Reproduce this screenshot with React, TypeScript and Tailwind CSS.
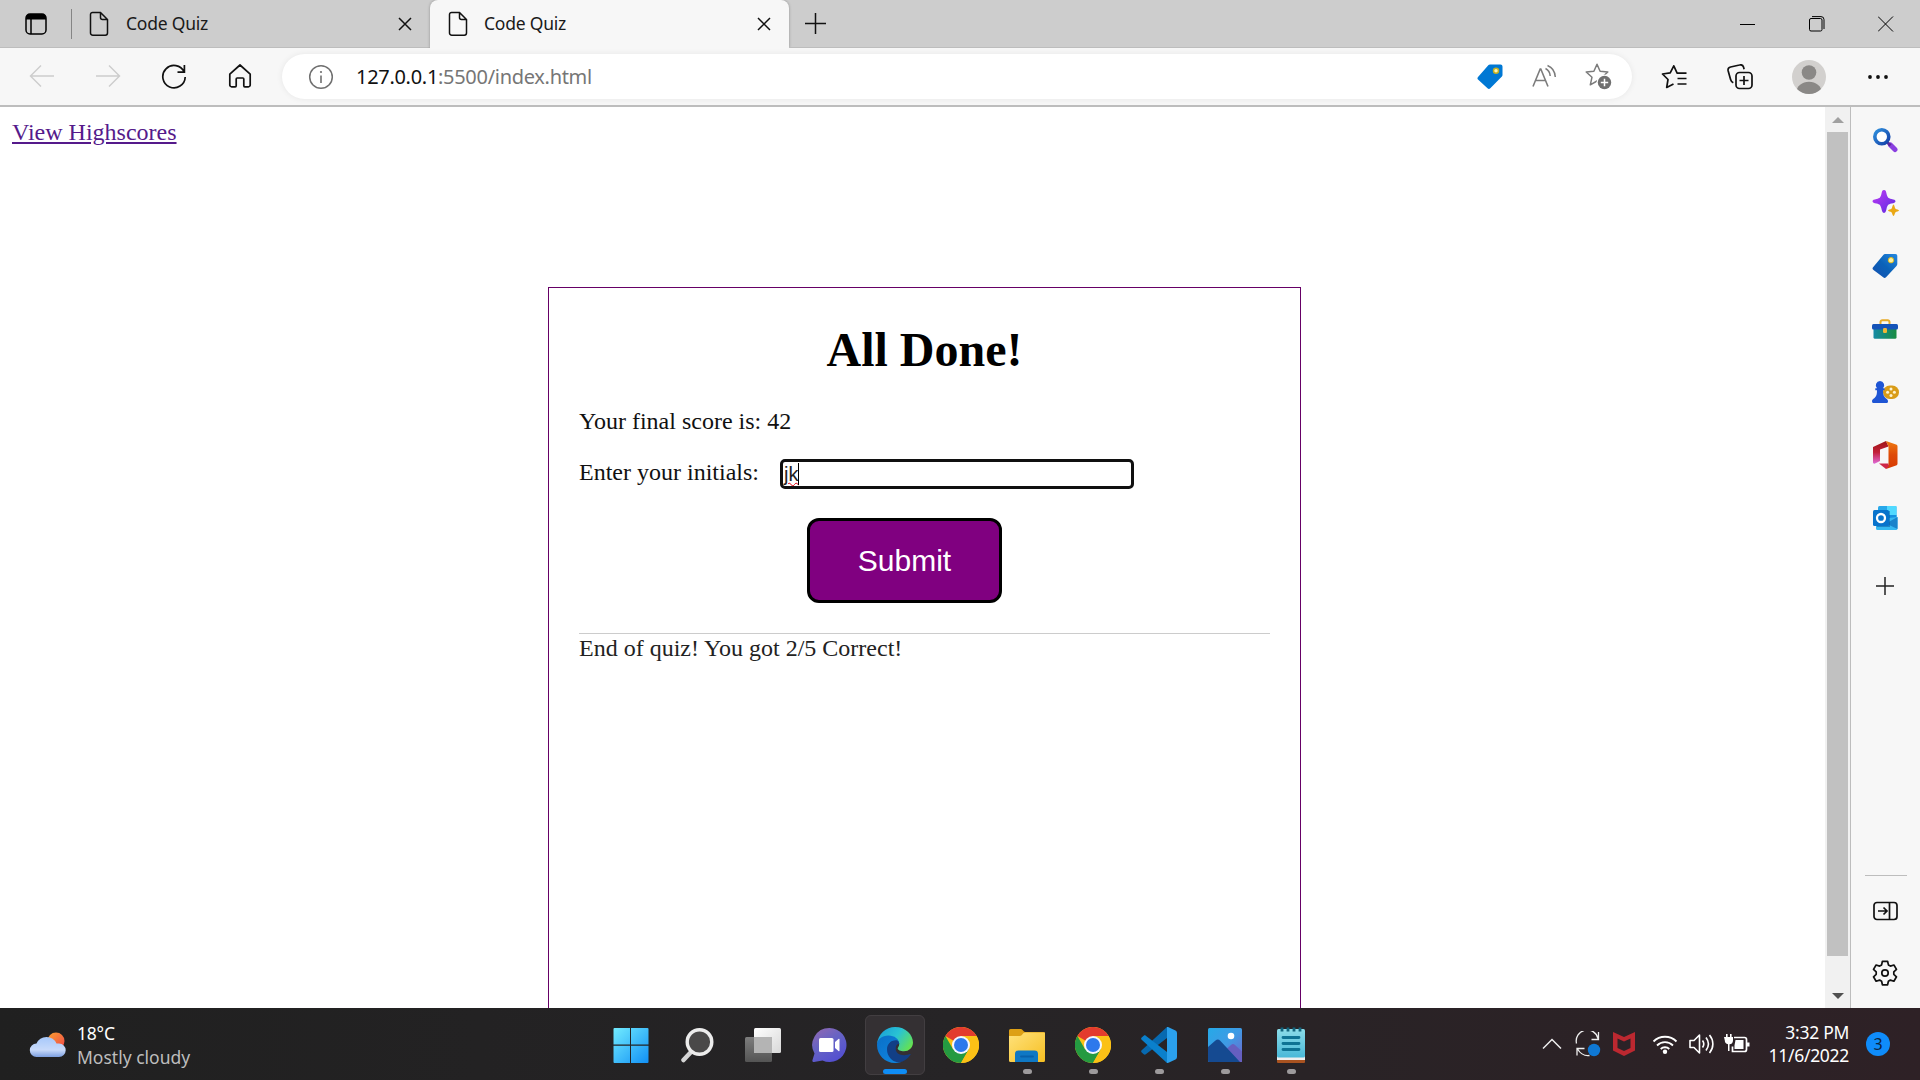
import React from "react";

type IconProps = { w: number; h: number; className?: string; children: React.ReactNode };

function Icon({ w, h, className = "", children }: IconProps) {
  return (
    <svg width={w} height={h} viewBox={`0 0 ${w} ${h}`} fill="none" className={`block shrink-0 ${className}`}>
      {children}
    </svg>
  );
}

function PageIcon() {
  return (
    <Icon w={20} h={26}>
      <path d="M3.5 1.5H11.5L18.5 8.5V22a2.2 2.2 0 0 1-2.2 2.2H3.7A2.2 2.2 0 0 1 1.5 22V3.5a2 2 0 0 1 2-2ZM11.5 1.5V6.5a2 2 0 0 0 2 2h5" stroke="#111" strokeWidth="1.5" />
    </Icon>
  );
}

function CloseIcon() {
  return (
    <Icon w={14} h={14}>
      <path d="M1 1 13 13M13 1 1 13" stroke="#111" strokeWidth="1.5" />
    </Icon>
  );
}

function TabStrip() {
  return (
    <div className="flex h-12 shrink-0 items-stretch bg-[#cdcdcd] font-['Noto_Sans','Open_Sans',sans-serif] text-[17.5px] tracking-[-0.22px] text-[#1a1a1a]">
      <div className="flex w-[430px] items-center border-b border-[#bdbdbd] pl-[25px]">
        <Icon w={22} h={22}>
          <rect x="1" y="1" width="20" height="20" rx="4" stroke="#000" strokeWidth="1.5" />
          <path d="M1 6V5a4 4 0 0 1 4-4h12a4 4 0 0 1 4 4v1.5H1Z" fill="#000" />
          <path d="M6 6v15" stroke="#000" strokeWidth="1.5" />
        </Icon>
        <div className="ml-6 h-[30px] w-px bg-[#858585]" />
        <div className="ml-[17px]"><PageIcon /></div>
        <span className="ml-[17px] w-[272px] whitespace-nowrap">Code Quiz</span>
        <CloseIcon />
      </div>
      <div className="flex w-[359px] items-center rounded-t-lg border-b border-[#f7f7f7] bg-[#f7f7f7] pl-[18px] shadow-[0_0_3px_rgba(0,0,0,0.3)]">
        <PageIcon />
        <span className="ml-4 w-[273px] whitespace-nowrap">Code Quiz</span>
        <CloseIcon />
      </div>
      <div className="flex flex-1 items-center border-b border-[#bdbdbd] pl-[15px]">
        <Icon w={22} h={22}>
          <path d="M11.500 0v21M1 10.500h21" stroke="#111" strokeWidth="1.500" />
        </Icon>
        <div className="ml-auto flex">
          <div className="flex w-[69px] justify-center">
            <Icon w={16} h={16}><path d="M0 8.5h15" stroke="#000" /></Icon>
          </div>
          <div className="flex w-[69px] justify-center">
            <Icon w={16} h={16}>
              <rect x=".5" y="2.5" width="12.5" height="12.5" rx="1.5" stroke="#000" />
              <path d="M3 .6h9a3 3 0 0 1 3 3V13" stroke="#000" />
            </Icon>
          </div>
          <div className="flex w-[69px] justify-center">
            <Icon w={16} h={16}><path d="M0 .5 15 15.500M15 .5 0 15.500" stroke="#000" /></Icon>
          </div>
        </div>
      </div>
    </div>
  );
}

const star = "M12 1.2 15.1 8.2 22.8 9 17 14.2 18.7 21.8 12 18 5.3 21.8 7 14.2 1.2 9 8.9 8.2Z";

function Toolbar() {
  return (
    <div className="flex h-[59px] shrink-0 items-center border-b-2 border-[#bdbdbd] bg-[#f7f7f7] pl-[9px]">
      <div className="flex w-[66px] justify-center">
        <Icon w={26} h={24} className="mb-px"><path d="M25 12H1.5M12 1.5 1.5 12 12 22.5" stroke="#cdcdcd" strokeWidth="1.5" /></Icon>
      </div>
      <div className="flex w-[66px] justify-center">
        <Icon w={26} h={24} className="mb-px"><path d="M1 12h23.5M14 1.5 24.5 12 14 22.5" stroke="#cdcdcd" strokeWidth="1.5" /></Icon>
      </div>
      <div className="flex w-[66px] justify-center">
        <Icon w={26} h={26}>
          <path d="M23.2 8A11.2 11.2 0 1 0 24.2 13M23.4 1v7.2H16.5" stroke="#111" strokeWidth="1.7" />
        </Icon>
      </div>
      <div className="flex w-[66px] justify-center">
        <Icon w={24} h={26} className="mb-[2px]">
          <path d="M1.8 11.2 12 2l10.2 9.2V22a1.8 1.8 0 0 1-1.8 1.8h-3.6A1 1 0 0 1 15.8 22.8V16a1 1 0 0 0-1-1H9.2a1 1 0 0 0-1 1v6.8a1 1 0 0 1-1 1H3.6A1.8 1.8 0 0 1 1.8 22Z" stroke="#111" strokeWidth="1.7" strokeLinejoin="round" />
        </Icon>
      </div>
      <div className="ml-[9px] flex h-[45px] w-[1350px] items-center rounded-full bg-white pr-[7px] pl-[26px] shadow-[0_0_6px_rgba(0,0,0,0.07)]">
        <Icon w={26} h={26}>
          <circle cx="13" cy="13" r="11.3" stroke="#707070" strokeWidth="1.5" />
          <path d="M13 11.5v7.5" stroke="#707070" strokeWidth="1.6" />
          <circle cx="13" cy="8" r="1.1" fill="#707070" />
        </Icon>
        <div className="ml-[22px] flex-1 font-['Noto_Sans','Open_Sans',sans-serif] text-[20px] tracking-[-0.3px] whitespace-nowrap text-[#767676]">
          <span className="text-[#111]">127.0.0.1</span>:5500/index.html
        </div>
        <div className="flex w-[54px] justify-center">
          <Icon w={26} h={26}>
            <path d="M13 .5h10.500a2 2 0 0 1 2 2V11a2 2 0 0 1-.6 1.500L13.300 24.300a2 2 0 0 1-2.800 0L1 15.500a2 2 0 0 1 0-2.600L11.500 1.100A2 2 0 0 1 13 .5Z" fill="#0078d4" />
            <circle cx="19" cy="6.700" r="2.500" fill="#fff4b0" stroke="#c4b022" strokeWidth="1.500" />
          </Icon>
        </div>
        <div className="flex w-[54px] justify-center">
          <Icon w={26} h={26}>
            <path d="M2 22.500 9.200 5h.6l7.200 17.500M4.500 16.500h10" stroke="#7c7c7c" strokeWidth="1.600" />
            <path d="M14.500 4.500c3 1.500 4.500 4.500 4.700 7.500M16.500 1.500c5 2 7.500 6.500 7.800 11.500" stroke="#7c7c7c" strokeWidth="1.500" />
          </Icon>
        </div>
        <div className="flex w-[54px] justify-center">
          <Icon w={27} h={27}>
            <path d={star} stroke="#7c7c7c" strokeWidth="1.500" strokeLinejoin="round" />
            <circle cx="19.500" cy="19.500" r="8" fill="#fff" />
            <circle cx="19.500" cy="19.500" r="6.700" fill="#707070" />
            <path d="M19.500 15.800v7.400M15.800 19.500h7.400" stroke="#fff" strokeWidth="1.500" />
          </Icon>
        </div>
      </div>
      <div className="ml-[9px] flex w-[66px] justify-center">
        <Icon w={26} h={26}>
          <path d="M16 8.800 12.800 1.800 9.200 8.800 1.500 10 7 15.500 5.700 23.500 12.500 20M15.500 9.200h10M16.500 14.500h9M16.500 20h9" stroke="#111" strokeWidth="1.700" strokeLinejoin="round" />
        </Icon>
      </div>
      <div className="flex w-[66px] justify-center">
        <Icon w={26} h={26}>
          <rect x="9" y="8.500" width="16" height="16" rx="3.500" stroke="#111" strokeWidth="1.700" />
          <path d="M17 12v9M12.500 16.500h9M6.300 18.800C4.500 18 4 17 3.600 15.500L1.200 7C.7 5 1.600 3.500 3.600 3L12.500 1c2-.5 3.500.3 4 2l.6 2.300" stroke="#111" strokeWidth="1.700" />
        </Icon>
      </div>
      <div className="flex w-[72px] justify-center">
        <Icon w={34} h={34}>
          <clipPath id="avatar"><circle cx="17" cy="17" r="17" /></clipPath>
          <g clipPath="url(#avatar)">
            <rect width="34" height="34" fill="#d2d0ce" />
            <circle cx="17" cy="12.500" r="7.300" fill="#8a8886" />
            <ellipse cx="17" cy="32" rx="12.500" ry="10.300" fill="#8a8886" />
          </g>
        </Icon>
      </div>
      <div className="flex w-[66px] justify-center">
        <Icon w={20} h={4}>
          <circle cx="2" cy="2" r="1.900" fill="#111" /><circle cx="10" cy="2" r="1.900" fill="#111" /><circle cx="18" cy="2" r="1.900" fill="#111" />
        </Icon>
      </div>
    </div>
  );
}

function QuizPage() {
  return (
    <main className="flex w-[1825px] flex-col overflow-hidden bg-white font-['Liberation_Serif',serif] text-2xl leading-[27px] text-black">
      <div className="pt-3 pl-3">
        <a href="#" className="text-[#551a8b] underline">View Highscores</a>
      </div>
      <section className="mt-[141px] ml-[548px] h-[900px] w-[753px] shrink-0 border border-[#660066] px-[30px]">
        <h1 className="mt-[34px] text-center text-5xl leading-[55px] font-bold">All Done!</h1>
        <p className="mt-[31px] text-[#111]">Your final score is: 42</p>
        <div className="mt-[19px] flex h-[40px] items-center">
          <label className="mb-[4px] text-[#111]">Enter your initials:</label>
          <div className="mb-px ml-[21px] flex h-[30px] w-[354px] items-center rounded-[5px] border-[3px] border-[#101010] pl-px font-['Liberation_Sans',sans-serif] text-[20px] leading-6 text-[#222]">
            <span className="underline decoration-red-600 decoration-wavy decoration-1 underline-offset-1">jk</span>
            <div className="h-[22px] w-px bg-black" />
          </div>
        </div>
        <button className="mt-[24px] ml-[228px] block h-[85px] w-[195px] rounded-xl border-[3px] border-black bg-[#800080] font-['Liberation_Sans',sans-serif] text-[30px] text-white">Submit</button>
        <div className="mt-[30px] border-t border-[#ccc] pt-px text-[#222]">End of quiz! You got 2/5 Correct!</div>
      </section>
    </main>
  );
}

function Scrollbar() {
  return (
    <div className="flex w-[26px] flex-col border-r border-[#bdbdbd] bg-[#f1f1f1] pl-[2px]">
      <div className="flex h-[25px] w-[21px] items-center justify-center">
        <Icon w={12} h={6}><path d="M0 6 6 0l6 6Z" fill="#a0a0a0" /></Icon>
      </div>
      <div className="h-[824px] w-[21px] bg-[#c1c1c1]" />
      <div className="flex w-[21px] flex-1 items-center justify-center pt-[27px]">
        <Icon w={12} h={6}><path d="M0 0 6 6l6-6Z" fill="#505050" /></Icon>
      </div>
    </div>
  );
}

function Cell({ children, tall = false }: { children: React.ReactNode; tall?: boolean }) {
  return <div className={`flex w-full shrink-0 items-center justify-center ${tall ? "h-[72px]" : "h-[63px]"}`}>{children}</div>;
}

function Sidebar() {
  return (
    <aside className="flex flex-1 flex-col items-center bg-[#f7f7f7] pt-px pr-px">
      <Cell>
        <Icon w={26} h={26}>
          <defs><linearGradient id="lens" x1="0" y1="0" x2="1" y2="1"><stop stopColor="#2f8fdc" /><stop offset="1" stopColor="#1440a8" /></linearGradient></defs>
          <path d="m18.500 18 4.500 4.500" stroke="#8a3fe0" strokeWidth="5" strokeLinecap="round" />
          <path d="m15.500 15.500 3 3" stroke="#5b2a9c" strokeWidth="3" />
          <circle cx="9.800" cy="9.800" r="7" fill="#fff" stroke="url(#lens)" strokeWidth="3.600" />
        </Icon>
      </Cell>
      <Cell>
        <Icon w={27} h={27}>
          <defs><linearGradient id="spark" x1="0" y1="0" x2="1" y2="1"><stop stopColor="#c03bf5" /><stop offset="1" stopColor="#5a2be0" /></linearGradient></defs>
          <path d="M12 1c1.800 0 2 1.500 2.600 4C15.500 8.500 16 9 19.500 10c2.500.6 4 .9 4 2.300s-1.500 1.700-4 2.300c-3.500 1-4 1.500-4.900 5C14 22 13.800 24 12 24s-2-2-2.600-4.400c-.9-3.500-1.400-4-4.900-5-2.500-.6-4-.9-4-2.300S2 10.600 4.500 10C8 9 8.500 8.500 9.400 5 10 2.500 10.200 1 12 1Z" fill="url(#spark)" />
          <path d="M21.500 15.500c.9 0 1.200 3.600 2 4.200s3.500.9 3.500 1.800-2.700 1-3.500 1.700-1.100 3.800-2 3.800-1.200-3.100-2-3.800-3.500-.8-3.500-1.700 2.700-1.200 3.500-1.800 1.100-4.200 2-4.200Z" fill="#eaa815" />
        </Icon>
      </Cell>
      <Cell>
        <Icon w={26} h={26}>
          <defs><linearGradient id="tagfill" x1="1" y1="0" x2="0" y2="1"><stop stopColor="#2588e0" /><stop offset=".5" stopColor="#0b62b8" /><stop offset="1" stopColor="#1550b0" /></linearGradient></defs>
          <path d="M13 1h10.500a1.800 1.800 0 0 1 1.800 1.800V11a3 3 0 0 1-.8 2L14 24.300a2 2 0 0 1-2.800 0L1.500 17a2 2 0 0 1-.2-3L11.500 1.700A2 2 0 0 1 13 1Z" fill="url(#tagfill)" />
          <circle cx="19" cy="7.200" r="2.700" fill="#fff0a0" stroke="#d9b91f" strokeWidth="1" />
        </Icon>
      </Cell>
      <Cell>
        <Icon w={26} h={20}>
          <defs><linearGradient id="box" x1="0" y1="0" x2="1" y2="0"><stop stopColor="#168aa5" /><stop offset="1" stopColor="#188c40" /></linearGradient></defs>
          <path d="M8.500 5.500V3a1.800 1.800 0 0 1 1.800-1.800h5.400A1.800 1.800 0 0 1 17.500 3v2.500" stroke="#e8ab28" strokeWidth="2" />
          <path d="M1.500 10h23v8.200a1.500 1.500 0 0 1-1.500 1.500H3a1.500 1.500 0 0 1-1.500-1.500Z" fill="url(#box)" />
          <rect x="0" y="5" width="26" height="5.500" rx="1.500" fill="#1553b8" />
          <rect x="11" y="9" width="4" height="5" rx="1.200" fill="#f1b735" />
        </Icon>
      </Cell>
      <Cell>
        <Icon w={27} h={24}>
          <rect x="11" y="5.500" width="16" height="13.500" rx="6.700" fill="#d99c18" />
          <g fill="#fff3cf"><circle cx="19" cy="8.900" r="1.500" /><circle cx="19" cy="15.600" r="1.500" /><circle cx="15.600" cy="12.200" r="1.500" /><circle cx="22.400" cy="12.200" r="1.500" /></g>
          <path d="M8 1a4.300 4.300 0 0 1 3 7.300h1.500v2H11c0 4 .5 6 2.500 7.700 1.500 1 2.500 1.700 2.500 3.200 0 1-.5 1.800-1.500 1.800H1.500C.5 23 0 22 0 21.200 0 19.700 1 19 2.500 18 4.500 16.300 5 14.300 5 10.300H3.300v-2H5A4.300 4.300 0 0 1 8 1Z" fill="#1f55d4" />
        </Icon>
      </Cell>
      <Cell>
        <Icon w={26} h={30}>
          <defs>
            <linearGradient id="offL" x1="0" y1="0" x2="0" y2="1"><stop stopColor="#9e1414" /><stop offset=".5" stopColor="#c2203a" /><stop offset="1" stopColor="#e06ad8" /></linearGradient>
            <linearGradient id="offR" x1="0" y1="0" x2="0" y2="1"><stop stopColor="#ef7a10" /><stop offset=".5" stopColor="#de4a08" /><stop offset="1" stopColor="#d83b01" /></linearGradient>
          </defs>
          <path d="M1 7 14 1l2.500 5.500-8.500 3V21l-5 2.500C2 24 1 23.500 1 22.500Z" fill="url(#offL)" />
          <path d="M14 1l10 3.500c1 .4 1.500 1 1.500 2v17c0 1-.5 1.700-1.500 2L14 29l2.500-4.500V6.500Z" fill="url(#offR)" />
          <path d="M7 23.500h9.500v3L14 29Z" fill="#ce2848" />
        </Icon>
      </Cell>
      <Cell>
        <Icon w={26} h={26}>
          <rect x="6" y="1" width="18.500" height="20" rx="1.500" fill="#28a8ea" />
          <path d="M15 1h9.500v10H15Z" fill="#50d9ff" />
          <path d="M15 10h9.500v6H15Z" fill="#1490df" />
          <path d="M4 14.500 25.500 12v11.500a1.500 1.500 0 0 1-1.500 1.500H5.500A1.500 1.500 0 0 1 4 23.500Z" fill="#35b8f1" />
          <path d="M25.500 12v12L14 18.500Z" fill="#1a83cb" />
          <rect x="5" y="6" width="13" height="16" fill="#08549c" opacity=".5" />
          <rect x="1" y="5" width="16" height="16" rx="1.500" fill="#0873cc" />
          <circle cx="9" cy="13" r="4" stroke="#fff" strokeWidth="2.300" />
        </Icon>
      </Cell>
      <Cell tall>
        <Icon w={18} h={18} className="mt-px mr-px"><path d="M9 0v18M0 9h18" stroke="#222" strokeWidth="1.500" /></Icon>
      </Cell>
      <div className="mt-[254px] ml-[1px] h-px w-[42px] shrink-0 bg-[#bdbdbd]" />
      <Cell tall>
        <Icon w={25} h={20} className="mb-[2px]">
          <rect x="1" y="1.500" width="23" height="17" rx="3" stroke="#111" strokeWidth="1.700" />
          <path d="M16.500 1.500v17M5 10h8.500M10.500 6.500 14 10l-3.500 3.500" stroke="#111" strokeWidth="1.700" />
        </Icon>
      </Cell>
      <div className="-mt-[7px]">
        <Cell>
          <Icon w={26} h={26}>
            <path d="M10.400 1.300h5.200l.8 3.600 2 1.200 3.500-1.100 2.600 4.400-2.700 2.500v2.400l2.700 2.500-2.600 4.400-3.500-1.100-2 1.200-.8 3.500h-5.200l-.8-3.500-2-1.200-3.500 1.100-2.600-4.400 2.700-2.500v-2.400L1.500 9.400 4.100 5l3.500 1.100 2-1.200Z" stroke="#111" strokeWidth="1.700" strokeLinejoin="round" />
            <circle cx="13" cy="13" r="3.200" stroke="#111" strokeWidth="1.700" />
          </Icon>
        </Cell>
      </div>
    </aside>
  );
}

function ChromeIcon() {
  return (
    <Icon w={36} h={36}>
      <circle cx="18" cy="18" r="18" fill="#fbc116" />
      <path d="M18 18 2.400 9A18 18 0 0 1 33.600 9Z" fill="#e33b2e" />
      <path d="M18 18 25.800 22.500 18 36A18 18 0 0 1 2.400 9L10.200 22.500Z" fill="#249a41" />
      <path d="M18 9h15.600A18 18 0 0 1 18 36l7.800-13.500Z" fill="#fbc116" />
      <circle cx="18" cy="18" r="9" fill="#f4f7ff" />
      <circle cx="18" cy="18" r="7" fill="#2d79ec" />
    </Icon>
  );
}

function TaskApp({ children, active = false, running = false }: { children: React.ReactNode; active?: boolean; running?: boolean }) {
  return (
    <div className="flex h-[60px] w-[66px] shrink-0 justify-center">
      <div className={`flex h-[60px] w-[60px] flex-col items-center rounded-md ${active ? "bg-[#343033] outline outline-1 -outline-offset-1 outline-[#423e41]" : ""}`}>
        <div className="mt-3 flex h-[36px] items-center">{children}</div>
        {active && <div className="mt-[6px] h-[5px] w-6 rounded-full bg-[#0f8df5]" />}
        {running && <div className="mt-[6px] h-[5px] w-[9px] rounded-full bg-[#9d9a9c]" />}
      </div>
    </div>
  );
}

function Taskbar() {
  return (
    <footer className="flex h-[72px] shrink-0 items-start bg-gradient-to-r from-[#202020] via-[#262426] via-50% to-[#2e2126] pt-[7px] font-['Noto_Sans','Open_Sans',sans-serif] text-[17.5px] tracking-[-0.2px] text-white">
      <div className="flex w-[598px] pl-[28px]">
        <Icon w={38} h={28} className="mt-[16px]">
          <defs>
            <linearGradient id="sun" x1="0" y1="0" x2="1" y2="1"><stop stopColor="#f9a02f" /><stop offset="1" stopColor="#f0464b" /></linearGradient>
            <linearGradient id="cloud" x1="0" y1="0" x2="0" y2="1"><stop stopColor="#a6c8fa" /><stop offset=".65" stopColor="#c8dafa" /><stop offset="1" stopColor="#7c9fe0" /></linearGradient>
          </defs>
          <circle cx="28" cy="10" r="8.500" fill="url(#sun)" />
          <path d="M8.500 26A6.700 6.700 0 0 1 8.500 12.600 10.800 10.800 0 0 1 28.500 12.600H31a6.700 6.700 0 0 1 0 13.400Z" fill="url(#cloud)" />
        </Icon>
        <div className="mt-[6px] ml-[11px] leading-6">
          <div>18°C</div>
          <div className="tracking-normal text-[#bdbdbd]">Mostly cloudy</div>
        </div>
      </div>
      <TaskApp>
        <Icon w={36} h={36} className="mr-px">
          <defs><linearGradient id="win" x1="0" y1="0" x2="36" y2="36" gradientUnits="userSpaceOnUse"><stop stopColor="#74eeff" /><stop offset="1" stopColor="#108ff5" /></linearGradient></defs>
          <path d="M2 1h15v16.500H.5V2a1 1 0 0 1 1-1ZM18 1H34.500a1 1 0 0 1 1 1v15.500H18ZM.5 18.800H17V36H1.500a1 1 0 0 1-1-1ZM18 18.800H35.500V35a1 1 0 0 1-1 1H18Z" fill="url(#win)" />
        </Icon>
      </TaskApp>
      <TaskApp>
        <Icon w={34} h={36}>
          <path d="M11.500 24.500 3.500 33" stroke="#d5d5d5" strokeWidth="4.500" strokeLinecap="round" />
          <circle cx="19.500" cy="15" r="12.300" fill="#4a4949" stroke="#ececec" strokeWidth="3.400" />
        </Icon>
      </TaskApp>
      <TaskApp>
        <Icon w={36} h={36}>
          <defs>
            <linearGradient id="tv" x1="0" y1="0" x2="1" y2="1"><stop stopColor="#fff" /><stop offset="1" stopColor="#d8d8d8" /></linearGradient>
            <linearGradient id="tv2" x1="0" y1="0" x2="0" y2="1"><stop stopColor="#7d7d7d" /><stop offset="1" stopColor="#545454" /></linearGradient>
          </defs>
          <rect x="0" y="10" width="27" height="25" rx="1.500" fill="url(#tv2)" />
          <rect x="9" y="1" width="27" height="25" rx="1.500" fill="url(#tv)" />
          <path d="M9 10h18v16H10.500A1.500 1.500 0 0 1 9 24.500Z" fill="#b4b4b4" />
        </Icon>
      </TaskApp>
      <TaskApp>
        <Icon w={36} h={36} className="mr-px">
          <defs><linearGradient id="chat" x1="0" y1="0" x2=".6" y2="1"><stop stopColor="#9468b0" /><stop offset=".5" stopColor="#6663c4" /><stop offset="1" stopColor="#5450d0" /></linearGradient></defs>
          <path d="M18.500 1a17 17 0 1 1-7 32.500L3 35c-1 .2-2-.8-1.500-2L3.500 26.500A17 17 0 0 1 18.500 1Z" fill="url(#chat)" />
          <rect x="8" y="11" width="14.500" height="14" rx="1.500" fill="#fff" />
          <path d="m24 15 3.500-3c.6-.5 1-.2 1 .5v11c0 .7-.4 1-1 .5L24 21Z" fill="#fff" />
        </Icon>
      </TaskApp>
      <TaskApp active>
        <Icon w={36} h={36}>
          <defs>
            <linearGradient id="eg" x1="0" y1=".2" x2="1" y2=".7"><stop stopColor="#1a9fd8" /><stop offset=".5" stopColor="#29c3d3" /><stop offset="1" stopColor="#66e250" /></linearGradient>
            <linearGradient id="eb" x1="0" y1="0" x2=".7" y2="1"><stop stopColor="#0a6fc8" /><stop offset="1" stopColor="#0f83dc" /></linearGradient>
          </defs>
          <path d="M0 17C1 7 9 0 18 0c11 0 18 8 18 15.500 0 5-4 8.800-9 8.800-3.500 0-6.300-1.300-6.300-2.800 0-1.200 1.500-1.800 1.500-4.500 0-4-4.200-6.500-9-6.500C7 10.500 2 13 0 17Z" fill="url(#eg)" />
          <path d="M0 18C0 12.500 5 8.500 11.500 8.500c6 0 10.700 3.500 10.700 8.500-1.500-2.500-3.700-3.500-6-3-3.200.8-5.200 4-4.700 8C12 28 16 33.500 24 35c-2 .7-4 1-6 1C8 36 0 28 0 18Z" fill="url(#eb)" />
          <path d="M20.500 13.500C14.500 12.500 10 17 10 22.500 10 29 15 35 22 35.500c5-.8 9-3.800 11.500-7.800.3-.5-.2-1-.7-.7-5 2.500-15.300 1.300-14-6.500.3-2.500 1.700-4 3.400-3.500 0-1.300-.7-2.700-1.700-3.500Z" fill="#123f86" />
        </Icon>
      </TaskApp>
      <TaskApp><ChromeIcon /></TaskApp>
      <TaskApp running>
        <Icon w={36} h={36}>
          <defs><linearGradient id="fold" x1="0" y1="0" x2="1" y2="1"><stop stopColor="#ffe27c" /><stop offset="1" stopColor="#f6bf22" /></linearGradient></defs>
          <path d="M0 9V3.500A1.500 1.500 0 0 1 1.500 2H12c1.500 0 2.500 3 4 3h18.500A1.500 1.500 0 0 1 36 6.500V10Z" fill="#dda016" />
          <path d="M0 9h11c2 0 3-3.500 5-3.500h20v28A1.500 1.500 0 0 1 34.500 35h-33A1.500 1.500 0 0 1 0 33.500Z" fill="url(#fold)" />
          <path d="M6 35V27a3.500 3.500 0 0 1 3.500-3.500h16A3.500 3.500 0 0 1 29 27v8Z" fill="#0f78c4" />
          <path d="M12 29.500h12" stroke="#0861aa" strokeWidth="1.800" strokeLinecap="round" />
        </Icon>
      </TaskApp>
      <TaskApp running><ChromeIcon /></TaskApp>
      <TaskApp running>
        <Icon w={36} h={36}>
          <path d="M26 0 .7 23.200a1.500 1.500 0 0 0 0 2.200l2 1.800c.6.600 1.500.6 2.100.1L26 11Z" fill="#0769b0" />
          <path d="M26 36 .7 12.800a1.500 1.500 0 0 1 0-2.200l2-1.800c.6-.6 1.500-.6 2.100-.1L26 25Z" fill="#0a80cc" />
          <path d="M26 0c.5-.1 1 0 1.500.2L34.500 3.600A2.500 2.500 0 0 1 36 5.900v24.200a2.500 2.500 0 0 1-1.500 2.300l-7 3.400c-.5.2-1 .3-1.500.2Z" fill="#2ba0ec" />
        </Icon>
      </TaskApp>
      <TaskApp running>
        <Icon w={34} h={34}>
          <defs><linearGradient id="sky" x1="0" y1="0" x2="1" y2="1"><stop stopColor="#25a9e8" /><stop offset=".5" stopColor="#3f9ae4" /><stop offset="1" stopColor="#7461cb" /></linearGradient></defs>
          <rect width="34" height="34" rx="1.500" fill="url(#sky)" />
          <path d="M18 21.500 23 17c1.500-1.200 2.500-1.200 4 0l7 6.500V34H20Z" fill="#665fc0" />
          <path d="M0 19 7.500 12.500c1.500-1.300 3-1.300 4.500 0L32 34H1.500A1.500 1.500 0 0 1 0 32.500Z" fill="#154a91" />
          <circle cx="23" cy="8" r="3.300" fill="#fff" />
        </Icon>
      </TaskApp>
      <TaskApp running>
        <Icon w={28} h={36}>
          <defs><linearGradient id="note" x1="0" y1="0" x2="0" y2="1"><stop stopColor="#8bdce9" /><stop offset="1" stopColor="#49b8d8" /></linearGradient></defs>
          <rect x="0" y="30" width="28" height="6" rx="1" fill="#a85220" />
          <rect x="0" y="29" width="28" height="4" fill="#eee" />
          <rect x="0" y="2" width="28" height="28.500" rx="1.500" fill="url(#note)" />
          <path d="M5 .5v4M11 .5v4M17 .5v4M23 .5v4" stroke="#12657e" strokeWidth="2.800" />
          <path d="M6 10.500h16M6 16.500h16M6 22.500h16" stroke="#0e7394" strokeWidth="2.800" strokeLinecap="round" />
        </Icon>
      </TaskApp>
      <div className="ml-auto flex h-[60px] items-center pr-[30px]">
        <Icon w={20} h={12} className="mb-[3px]"><path d="m1 10.500 9-9 9 9" stroke="#eee" strokeWidth="1.500" /></Icon>
        <Icon w={26} h={26} className="mb-[2px] ml-[13px]">
          <path d="M1.500 12.500A11 11 0 0 1 23 7.500M23.500 1v7.500H16.500M2 24.500V17.500h7.500M2.500 18c3 5 8 7 12 6.500" stroke="#eee" strokeWidth="1.300" />
          <circle cx="19" cy="19" r="6.200" fill="#0f78d4" />
        </Icon>
        <Icon w={22} h={24} className="mb-[2px] ml-[12px]">
          <path d="m0 0 11 5L22 0v18.500L11 24 0 18.500Z" fill="#bc2830" />
          <path d="m4.500 6.500 6.500 3 6.500-3v9.500L11 19l-6.500-3Z" fill="#2c2227" />
        </Icon>
        <Icon w={26} h={22} className="mb-[2px] ml-[17px]">
          <path d="M1.500 8.500a16.300 16.300 0 0 1 23 0M5 12.500a11.300 11.300 0 0 1 16 0M8.700 16a6.200 6.200 0 0 1 8.600 0" stroke="#fff" strokeWidth="1.800" />
          <circle cx="13" cy="18.700" r="2.200" fill="#fff" />
        </Icon>
        <Icon w={26} h={22} className="mb-[2px] ml-[10px]">
          <path d="M2 7.500h4L11.500 2v18L6 14.500H2Z" stroke="#fff" strokeWidth="1.600" strokeLinejoin="round" />
          <path d="M14.500 7.500c1.500 2 1.500 5 0 7M18 4.500c3 4 3 9 0 13M21.500 2c4.500 5.500 4.500 12.500 0 18" stroke="#fff" strokeWidth="1.600" />
        </Icon>
        <Icon w={26} h={22} className="mb-[3px] ml-[10px]">
          <path d="M10 4.500h10.500a2 2 0 0 1 2 2v10a2 2 0 0 1-2 2H8.500v-5" stroke="#fff" strokeWidth="1.700" />
          <path d="M11.500 7h8v9h-9v-3.500Z" fill="#fff" />
          <path d="M23 9.500h2.500v4H23ZM0 4h9v3.500a4 4 0 0 1-3.500 3.800V18H4v-6.700A4 4 0 0 1 .8 7.500Z" fill="#fff" />
          <path d="M2.800 1v4M6.800 1v4" stroke="#fff" strokeWidth="1.600" />
        </Icon>
        <div className="mb-[2px] w-[99px] text-right leading-[23px] tracking-[-0.3px] whitespace-nowrap">
          <div>3:32 PM</div>
          <div>11/6/2022</div>
        </div>
        <div className="mb-[2px] ml-[17px] flex h-6 w-6 items-center justify-center rounded-full bg-[#0f8cfa] text-[16px] text-[#0c2340]">3</div>
      </div>
    </footer>
  );
}

export default function App() {
  return (
    <div className="flex h-[1080px] w-[1920px] flex-col overflow-hidden bg-white">
      <TabStrip />
      <Toolbar />
      <div className="flex h-[901px] shrink-0">
        <QuizPage />
        <Scrollbar />
        <Sidebar />
      </div>
      <Taskbar />
    </div>
  );
}
